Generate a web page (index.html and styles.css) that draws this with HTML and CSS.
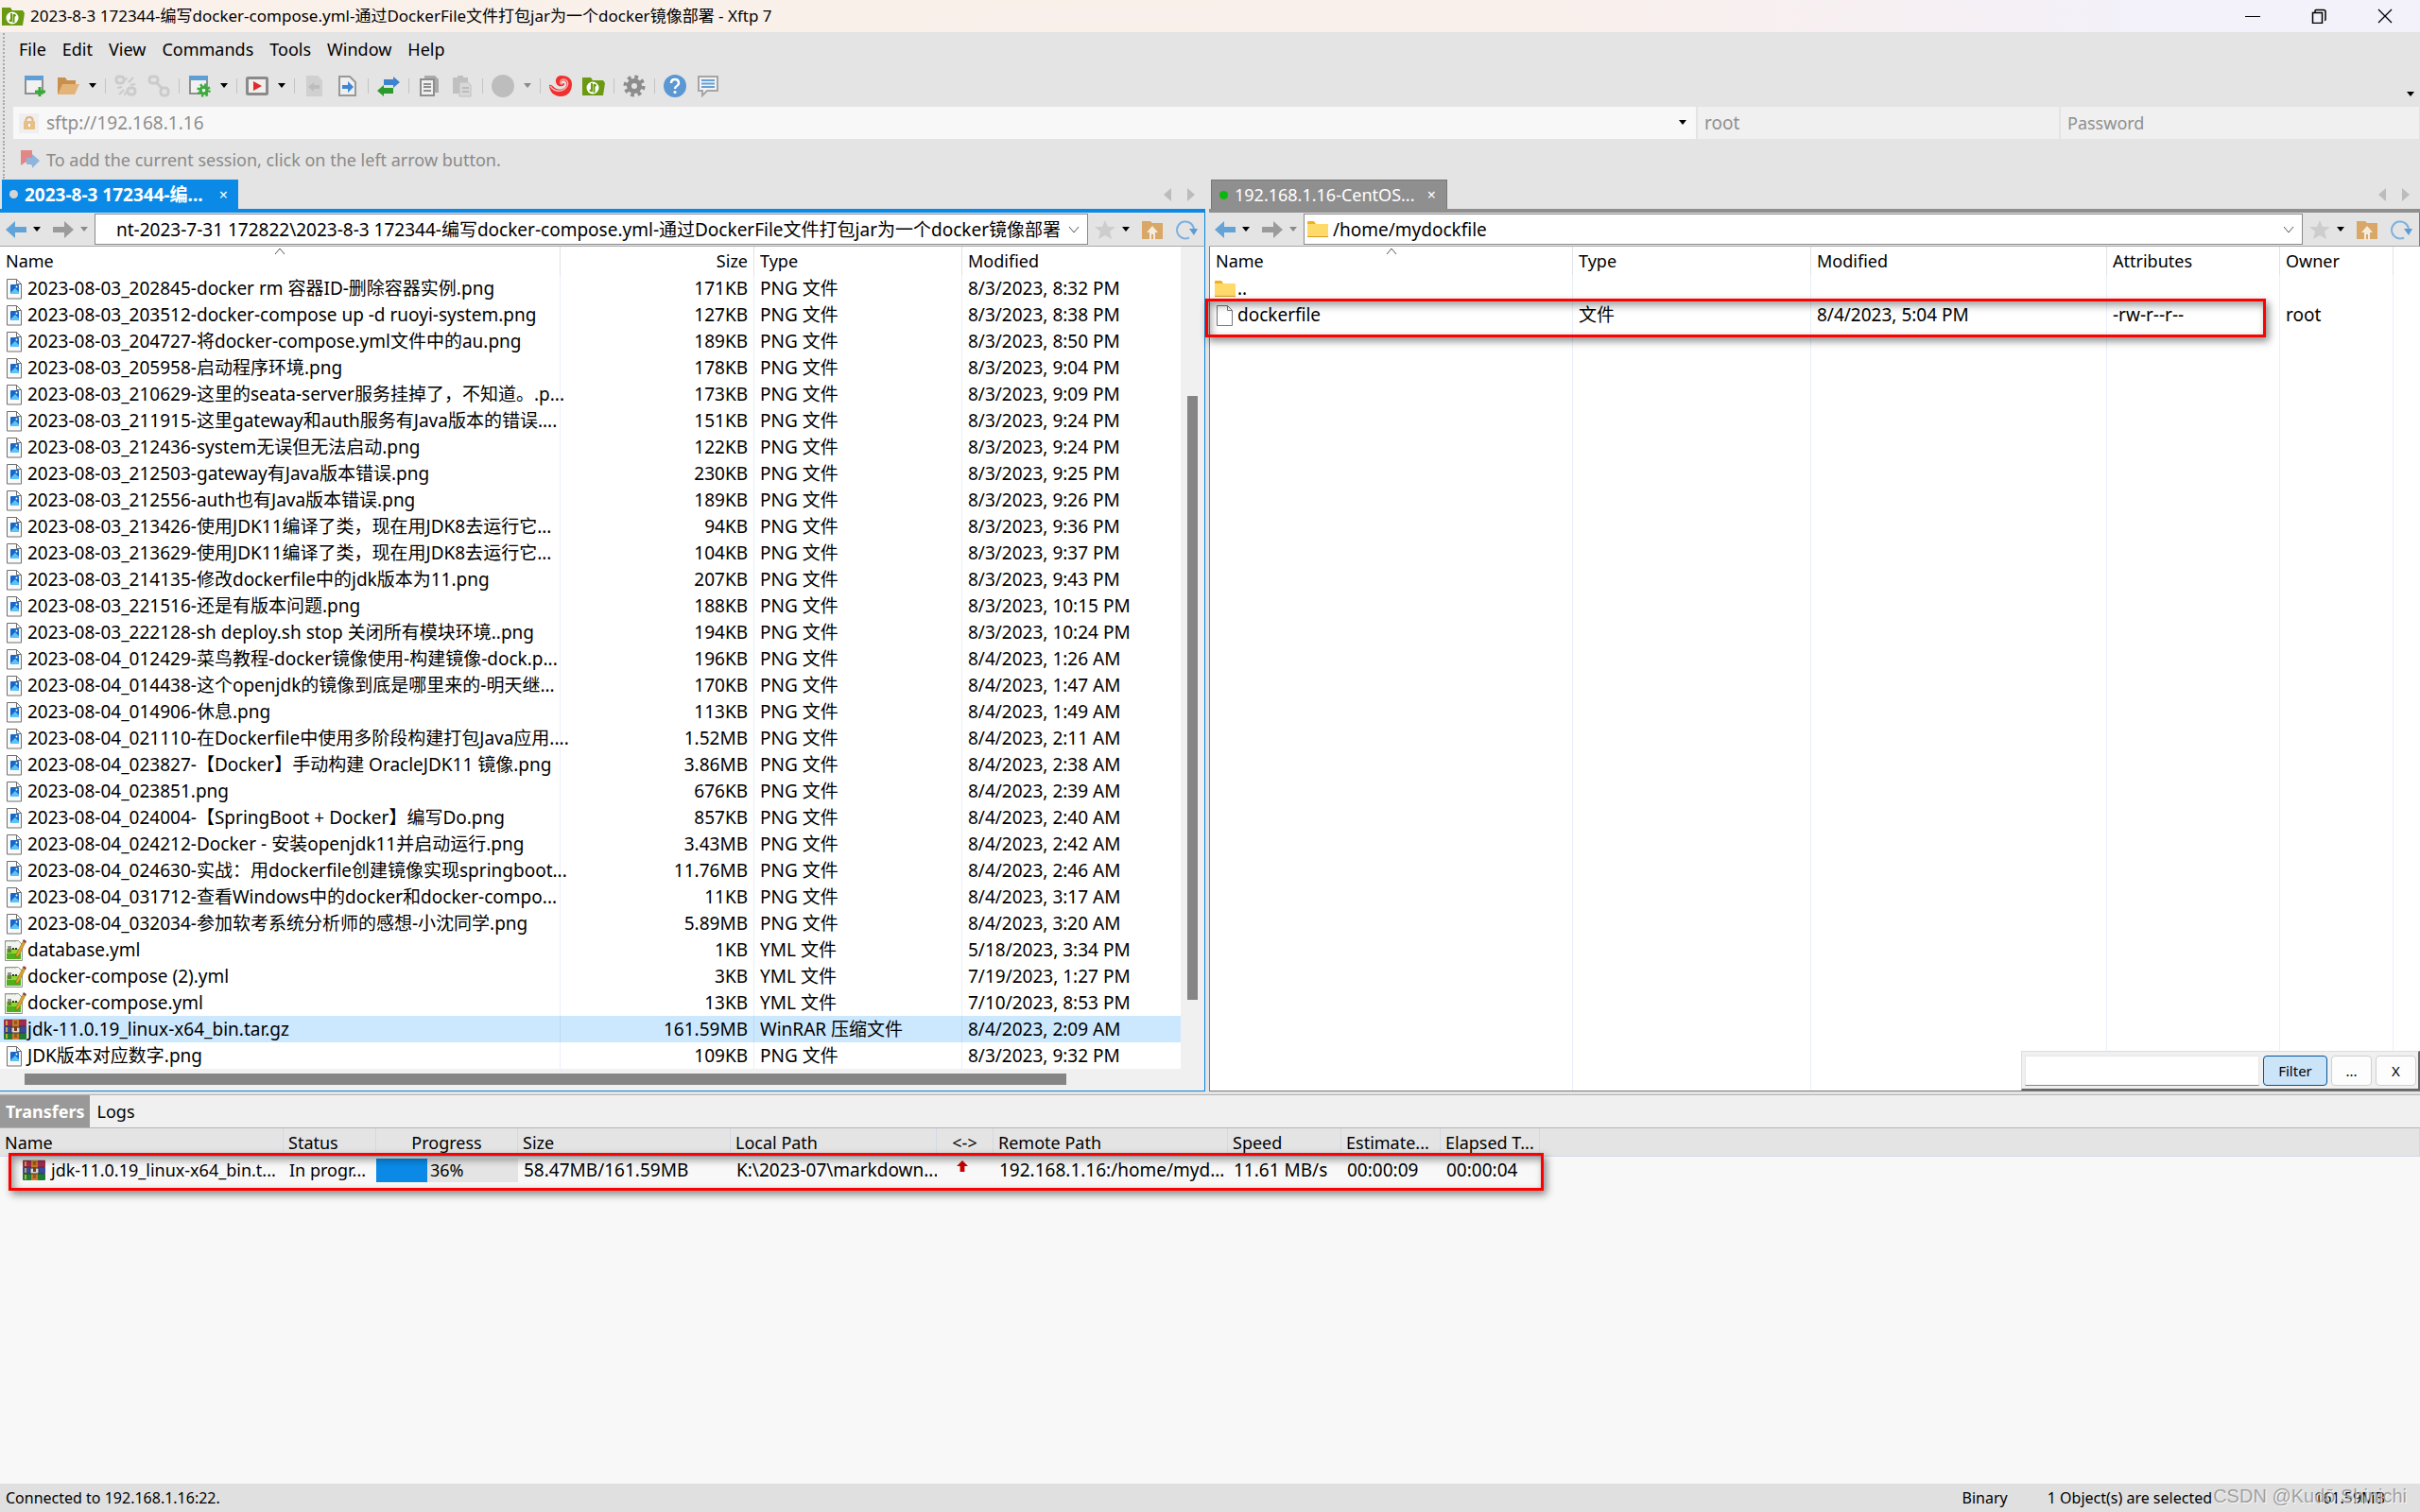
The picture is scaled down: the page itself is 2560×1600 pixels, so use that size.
FILE: index.html
```html
<!DOCTYPE html>
<html lang="zh-CN">
<head>
<meta charset="utf-8">
<title>2023-8-3 172344-编写docker-compose.yml-通过DockerFile文件打包jar为一个docker镜像部署 - Xftp 7</title>
<link rel="stylesheet" href="styles.css">
</head>
<body>
<svg class="defs" aria-hidden="true">
  <symbol id="png" viewBox="4 0 24 24"><path d="M7.500 1.500h10l5 5v15.500h-15zM17.500 1.500v5h5" fill="#fafafa" stroke="#6e6e6e"/><rect x="11" y="7" width="9" height="10" rx="1" fill="#1668c8"/><path d="M11 16l5-5 4 4v1q0 1-1 1h-7q-1 0-1-1z" fill="#5cc3f5"/><circle cx="17.500" cy="9.500" r="1" fill="#fff"/></symbol>
  <symbol id="yml" viewBox="0 0 24 24"><path d="M1.500 1.500h14l4 4v17h-18z" fill="#f2f5ee" stroke="#8d948a"/><path d="M3 10h15v11H3z" fill="#8ed62e"/><path d="M3 15h15v6H3z" fill="#4fae1a"/><path d="M5 7v7M7 7v7" stroke="#333"/><path d="M9 10h2M12 10h2" stroke="#333" stroke-width="2"/><path d="M2 2h12" stroke="#999" stroke-dasharray="2 1"/><path d="M21 1l2 2-7 14-3 2 0-3z" fill="#e0a52a" stroke="#8c6412" stroke-width=".6"/><path d="M21 0l3 2-1 2-3-2z" fill="#8a3b4a"/></symbol>
  <symbol id="rar" viewBox="0 0 24 24"><rect y="1" width="24" height="7" rx="1" fill="#a52a50"/><rect y="8" width="24" height="7" rx="1" fill="#3a4a9c"/><rect y="15" width="24" height="7" rx="1" fill="#1f7a34"/><path d="M0 1h24M0 8h24M0 15h24" stroke="#222" stroke-opacity=".5"/><path d="M3 2v5M3 9v5M3 16v5" stroke="#e2c23a" stroke-width="1.500"/><rect x="9" y="1" width="7" height="21" fill="#c8792a"/><rect x="8" y="9" width="9" height="6" rx="1" fill="#d8d8d8" stroke="#333"/><rect x="11" y="8" width="3" height="5" fill="#7a3c10"/><path d="M11 3h3M11 5h3M11 17h3M11 19h3" stroke="#6b3a0c"/></symbol>
  <symbol id="folder" viewBox="0 0 24 24"><path d="M1 4q0-1 1-1h6l2 3h12v5H1z" fill="#f2b020"/><path d="M1 6h21q1 0 1 1v12H1z" fill="#ffd96a"/><path d="M1 19h22v1H1z" fill="#d99a1c"/></symbol>
  <symbol id="file" viewBox="0 0 24 24"><path d="M3.500 1.500h11l5 5v16h-16zM14.500 1.500v5h5" fill="#fff" stroke="#777"/></symbol>
  <symbol id="back" viewBox="0 0 24 20"><path d="M1 10L11 1v6h12v6H11v6z" fill="#64a3d8"/></symbol>
  <symbol id="fwd" viewBox="0 0 24 20"><path d="M23 10L13 1v6H1v6h12v6z" fill="#9b9b9b"/></symbol>
  <symbol id="caret" viewBox="0 0 8 6"><path d="M0 0h8L4 5z" fill="currentColor"/></symbol>
  <symbol id="chev" viewBox="0 0 12 8"><path d="M1 1l5 6 5-6" fill="none" stroke="#555"/></symbol>
  <symbol id="sort" viewBox="0 0 12 8"><path d="M1 7l5-6 5 6" fill="none" stroke="#555"/></symbol>
  <symbol id="star" viewBox="0 0 24 24"><path d="M12 2l3 7 8 0-6 5 2 8-7-4-7 4 2-8-6-5 8 0z" fill="#cdcdcd"/></symbol>
  <symbol id="up" viewBox="0 0 24 24"><path d="M1 3h9l2 2h11v17H1z" fill="#d9a766"/><path d="M12 8l6 7h-3v8h-2v-6h-2v6H9v-8H6z" fill="#f5ecdf"/></symbol>
  <symbol id="refresh" viewBox="0 0 24 24"><path d="M15 20.500A9 9 0 1 1 20 12" fill="none" stroke="#7fb0de" stroke-width="2"/><path d="M15 11h9l-4 7z" fill="#5b9bd8"/></symbol>
  <symbol id="left" viewBox="0 0 10 14"><path d="M9 0v14L1 7z" fill="#bcbcbc"/></symbol>
  <symbol id="right" viewBox="0 0 10 14"><path d="M1 0v14l8-7z" fill="#bcbcbc"/></symbol>
  <symbol id="xftp" viewBox="0 0 24 24"><path d="M0 3h9l2 3h11l2 3-2 13H0z" fill="#6a9a12"/><circle cx="11" cy="14" r="6.500" fill="#fff"/><path d="M10 9v8q0 1-2-1M12.500 19v-8q0-1 2 1" fill="none" stroke="#6a9a12" stroke-width="2"/></symbol>
  <symbol id="cog" viewBox="0 0 24 24"><circle cx="12" cy="12" r="5.500" fill="none" stroke="currentColor" stroke-width="5"/><circle cx="12" cy="12" r="9.500" fill="none" stroke="currentColor" stroke-width="4" stroke-dasharray="3.700 3.760"/></symbol>
</svg>

<header class="titlebar">
  <svg class="i24"><use href="#xftp"/></svg>
  <h1>2023-8-3 172344-编写docker-compose.yml-通过DockerFile文件打包jar为一个docker镜像部署 - Xftp 7</h1>
  <div class="winbtns">
    <button aria-label="Minimize"><svg class="i16"><path d="M0 8.500h16" stroke="#000"/></svg></button>
    <button aria-label="Restore"><svg class="i16"><path d="M1.500 4.500h10v11h-10zM4 4V2.500Q4 1.500 5 1.500h8q2 0 2 2v8q0 1-1 1" fill="none" stroke="#000" stroke-width="1.500"/></svg></button>
    <button aria-label="Close"><svg class="i16"><path d="M1 1l14 14M15 1L1 15" stroke="#000" stroke-width="1.300"/></svg></button>
  </div>
</header>

<nav class="menubar grip">
  <button>File</button><button>Edit</button><button>View</button><button>Commands</button><button>Tools</button><button>Window</button><button>Help</button>
</nav>

<div class="toolbar grip">
  <button aria-label="New"><svg class="i24"><path d="M2 2h18v18H2z" fill="#f1f1f1" stroke="#8f8f8f" stroke-width="2"/><path d="M1 1h20v5H1z" fill="#5f9fd6"/><path d="M17 13v10M12 18h11" stroke="#2fae2f" stroke-width="3"/></svg></button>
  <button aria-label="Open"><svg class="i24"><path d="M1 3h8l2 3h9v4H7L3 21H1z" fill="#c98f4c"/><path d="M6 10h18l-5 11H1z" fill="#e3b377"/></svg></button>
  <svg class="caret"><use href="#caret"/></svg><i class="sep"></i>
  <button aria-label="Reconnect" disabled><svg class="i24" fill="none" stroke="#cbcbcb" stroke-width="3"><rect x="2" y="2" width="8" height="7" rx="3"/><rect x="14" y="14" width="8" height="7" rx="3"/><path d="M13 3l-1 3M20 3l-5 5M22 10l-5 1M3 14l5-1M5 21l5-5M11 22l1-4" stroke-width="2"/></svg></button>
  <button aria-label="Disconnect" disabled><svg class="i24" fill="none" stroke="#cbcbcb" stroke-width="3"><rect x="2" y="2" width="9" height="7" rx="3"/><rect x="14" y="14" width="8" height="8" rx="3"/><path d="M9 8l7 7"/></svg></button>
  <i class="sep"></i>
  <button aria-label="Session properties"><svg class="i24"><path d="M2 2h18v18H2z" fill="#f1f1f1" stroke="#8f8f8f" stroke-width="2"/><path d="M1 1h20v5H1z" fill="#5f9fd6"/><g color="#3bab3b"><use href="#cog" x="9" y="9" width="15" height="15"/></g></svg></button>
  <svg class="caret"><use href="#caret"/></svg><i class="sep"></i>
  <button aria-label="Run"><svg class="i24"><rect x="1.500" y="3.500" width="21" height="17" rx="1" fill="#f3eeee" stroke="#8a8a8a" stroke-width="3"/><path d="M8 7l9 5-9 5z" fill="#e02a2a"/></svg></button>
  <svg class="caret"><use href="#caret"/></svg><i class="sep"></i>
  <button aria-label="Transfer left" disabled><svg class="i24"><path d="M3 1h12l5 5v17H3z" fill="#d0d0d0"/><path d="M5 13l6-5v3h6v4h-6v3z" fill="#bdbdbd"/></svg></button>
  <button aria-label="Transfer right"><svg class="i24"><path d="M3 2h11l6 6v14H3z" fill="#efefef" stroke="#999" stroke-width="2"/><path d="M18 13l-6-6v4H6v4h6v4z" fill="#3f86d6"/></svg></button>
  <i class="sep"></i>
  <button aria-label="Synchronize"><svg class="i24"><path d="M24 8l-7-6v3H7v6h10v3z" fill="#3d84cf"/><path d="M0 17l7-6v3h10v6H7v3z" fill="#2c9a2c"/></svg></button>
  <i class="sep"></i>
  <button aria-label="Copy"><svg class="i24"><path d="M7 1h11l4 4v14H7z" fill="#a9a9a9"/><path d="M3 5h14v17H3z" fill="#efefef" stroke="#8e8e8e" stroke-width="2"/><path d="M6 10h8M6 13h8M6 17h8" stroke="#8e8e8e" stroke-width="2"/></svg></button>
  <button aria-label="Paste" disabled><svg class="i24"><path d="M2 3h5V1h6v2h5v17H2z" fill="#c0c0c0"/><path d="M9 8h9l3 3v12H9z" fill="#d8d8d8" stroke="#c0c0c0"/><path d="M12 14h7M12 18h7" stroke="#bbb" stroke-width="2"/></svg></button>
  <i class="sep"></i>
  <button aria-label="Stop" disabled><svg class="i24"><circle cx="12" cy="12" r="12" fill="#bdbdbd"/></svg></button>
  <svg class="caret dim"><use href="#caret"/></svg><i class="sep"></i>
  <button aria-label="Xshell"><svg class="i24"><path d="M13 1C6 1 5 9 10 12c4 1 7-1 6-3-2 1-4 0-3-2 3-2 6 1 5 4-1 5-8 6-12 3-2-1-3-4-6-3 0 7 5 12 12 12 8 0 12-6 12-13C24 4 19 1 13 1z" fill="#f02f2f"/><path d="M1 12c5 7 14 7 18 0 2-4-1-8-5-7-3 1-3 5 0 5" fill="none" stroke="#f7b9b4" stroke-width="1.300"/></svg></button>
  <button aria-label="Xftp"><svg class="i24"><use href="#xftp"/></svg></button>
  <i class="sep"></i>
  <button aria-label="Options" class="gear"><svg class="i24"><use href="#cog"/></svg></button>
  <i class="sep"></i>
  <button aria-label="Help"><svg class="i24"><circle cx="12" cy="12" r="12" fill="#5b97d3"/><path d="M8 9q0-4 4-4t4 4q0 2-2 3t-2 3" fill="none" stroke="#fff" stroke-width="2.500"/><circle cx="12" cy="18.500" r="1.600" fill="#fff"/></svg></button>
  <button aria-label="Feedback"><svg class="i24"><path d="M2 2h20v15H11l-5 5v-5H2z" fill="#f2f2f2" stroke="#a5a5a5" stroke-width="2"/><path d="M5 6h14M5 9.500h14M5 13h14" stroke="#68a0d8" stroke-width="2"/></svg></button>
  <svg class="caret more"><use href="#caret"/></svg>
</div>

<form class="address grip">
  <label class="host"><span class="lockbox"><svg class="i16"><path d="M4.500 7V5q0-3 3.500-3t3.500 3v2" fill="none" stroke="#e0b478" stroke-width="2"/><rect x="2" y="6" width="12" height="9" rx="1" fill="#e8bf86"/><path d="M8 9v3" stroke="#fff" stroke-width="2"/></svg></span><input aria-label="Host" value="sftp://192.168.1.16"><svg class="caret"><use href="#caret"/></svg></label>
  <input class="user" aria-label="User name" value="root">
  <input class="pass" type="password" aria-label="Password" placeholder="Password">
</form>

<div class="bookmarks grip"><svg class="i24"><path d="M2 2h12v16l-6-4-6 4z" fill="#e28686"/><path d="M22 13l-8-7v4H8v7h6v4z" fill="#8fb4de"/></svg><span>To add the current session, click on the left arrow button.</span></div>

<main class="panes">
  <section class="pane local">
    <div class="tabs"><button class="tab"><i class="dot"></i><b>2023-8-3 172344-编...</b><span class="x">×</span></button><span class="tabnav"><svg><use href="#left"/></svg><svg><use href="#right"/></svg></span></div>
    <div class="pathbar">
      <button aria-label="Back"><svg class="arrow"><use href="#back"/></svg></button><svg class="caret"><use href="#caret"/></svg>
      <button aria-label="Forward"><svg class="arrow"><use href="#fwd"/></svg></button><svg class="caret dim"><use href="#caret"/></svg>
      <label class="path"><input aria-label="Local path" value="nt-2023-7-31 172822\2023-8-3 172344-编写docker-compose.yml-通过DockerFile文件打包jar为一个docker镜像部署"><svg class="chev"><use href="#chev"/></svg></label>
      <svg class="i24"><use href="#star"/></svg><svg class="caret"><use href="#caret"/></svg>
      <button class="upbtn" aria-label="Up"><svg class="i24"><use href="#up"/></svg></button><button aria-label="Refresh"><svg class="i24"><use href="#refresh"/></svg></button>
    </div>
    <div class="listwrap">
      <table class="files">
        <colgroup><col class="c-name"><col class="c-size"><col class="c-type"><col></colgroup>
        <thead><tr><th>Name<svg class="sort"><use href="#sort"/></svg></th><th class="num">Size</th><th>Type</th><th>Modified</th></tr></thead>
        <tbody>
<tr><td><svg><use href="#png"/></svg>2023-08-03_202845-docker rm 容器ID-删除容器实例.png</td><td>171KB</td><td>PNG 文件</td><td>8/3/2023, 8:32 PM</td></tr>
<tr><td><svg><use href="#png"/></svg>2023-08-03_203512-docker-compose up -d ruoyi-system.png</td><td>127KB</td><td>PNG 文件</td><td>8/3/2023, 8:38 PM</td></tr>
<tr><td><svg><use href="#png"/></svg>2023-08-03_204727-将docker-compose.yml文件中的au.png</td><td>189KB</td><td>PNG 文件</td><td>8/3/2023, 8:50 PM</td></tr>
<tr><td><svg><use href="#png"/></svg>2023-08-03_205958-启动程序环境.png</td><td>178KB</td><td>PNG 文件</td><td>8/3/2023, 9:04 PM</td></tr>
<tr><td><svg><use href="#png"/></svg>2023-08-03_210629-这里的seata-server服务挂掉了，不知道。.p...</td><td>173KB</td><td>PNG 文件</td><td>8/3/2023, 9:09 PM</td></tr>
<tr><td><svg><use href="#png"/></svg>2023-08-03_211915-这里gateway和auth服务有Java版本的错误....</td><td>151KB</td><td>PNG 文件</td><td>8/3/2023, 9:24 PM</td></tr>
<tr><td><svg><use href="#png"/></svg>2023-08-03_212436-system无误但无法启动.png</td><td>122KB</td><td>PNG 文件</td><td>8/3/2023, 9:24 PM</td></tr>
<tr><td><svg><use href="#png"/></svg>2023-08-03_212503-gateway有Java版本错误.png</td><td>230KB</td><td>PNG 文件</td><td>8/3/2023, 9:25 PM</td></tr>
<tr><td><svg><use href="#png"/></svg>2023-08-03_212556-auth也有Java版本错误.png</td><td>189KB</td><td>PNG 文件</td><td>8/3/2023, 9:26 PM</td></tr>
<tr><td><svg><use href="#png"/></svg>2023-08-03_213426-使用JDK11编译了类，现在用JDK8去运行它...</td><td>94KB</td><td>PNG 文件</td><td>8/3/2023, 9:36 PM</td></tr>
<tr><td><svg><use href="#png"/></svg>2023-08-03_213629-使用JDK11编译了类，现在用JDK8去运行它...</td><td>104KB</td><td>PNG 文件</td><td>8/3/2023, 9:37 PM</td></tr>
<tr><td><svg><use href="#png"/></svg>2023-08-03_214135-修改dockerfile中的jdk版本为11.png</td><td>207KB</td><td>PNG 文件</td><td>8/3/2023, 9:43 PM</td></tr>
<tr><td><svg><use href="#png"/></svg>2023-08-03_221516-还是有版本问题.png</td><td>188KB</td><td>PNG 文件</td><td>8/3/2023, 10:15 PM</td></tr>
<tr><td><svg><use href="#png"/></svg>2023-08-03_222128-sh deploy.sh stop 关闭所有模块环境..png</td><td>194KB</td><td>PNG 文件</td><td>8/3/2023, 10:24 PM</td></tr>
<tr><td><svg><use href="#png"/></svg>2023-08-04_012429-菜鸟教程-docker镜像使用-构建镜像-dock.p...</td><td>196KB</td><td>PNG 文件</td><td>8/4/2023, 1:26 AM</td></tr>
<tr><td><svg><use href="#png"/></svg>2023-08-04_014438-这个openjdk的镜像到底是哪里来的-明天继...</td><td>170KB</td><td>PNG 文件</td><td>8/4/2023, 1:47 AM</td></tr>
<tr><td><svg><use href="#png"/></svg>2023-08-04_014906-休息.png</td><td>113KB</td><td>PNG 文件</td><td>8/4/2023, 1:49 AM</td></tr>
<tr><td><svg><use href="#png"/></svg>2023-08-04_021110-在Dockerfile中使用多阶段构建打包Java应用....</td><td>1.52MB</td><td>PNG 文件</td><td>8/4/2023, 2:11 AM</td></tr>
<tr><td><svg><use href="#png"/></svg>2023-08-04_023827-【Docker】手动构建 OracleJDK11 镜像.png</td><td>3.86MB</td><td>PNG 文件</td><td>8/4/2023, 2:38 AM</td></tr>
<tr><td><svg><use href="#png"/></svg>2023-08-04_023851.png</td><td>676KB</td><td>PNG 文件</td><td>8/4/2023, 2:39 AM</td></tr>
<tr><td><svg><use href="#png"/></svg>2023-08-04_024004-【SpringBoot + Docker】编写Do.png</td><td>857KB</td><td>PNG 文件</td><td>8/4/2023, 2:40 AM</td></tr>
<tr><td><svg><use href="#png"/></svg>2023-08-04_024212-Docker - 安装openjdk11并启动运行.png</td><td>3.43MB</td><td>PNG 文件</td><td>8/4/2023, 2:42 AM</td></tr>
<tr><td><svg><use href="#png"/></svg>2023-08-04_024630-实战：用dockerfile创建镜像实现springboot...</td><td>11.76MB</td><td>PNG 文件</td><td>8/4/2023, 2:46 AM</td></tr>
<tr><td><svg><use href="#png"/></svg>2023-08-04_031712-查看Windows中的docker和docker-compo...</td><td>11KB</td><td>PNG 文件</td><td>8/4/2023, 3:17 AM</td></tr>
<tr><td><svg><use href="#png"/></svg>2023-08-04_032034-参加软考系统分析师的感想-小沈同学.png</td><td>5.89MB</td><td>PNG 文件</td><td>8/4/2023, 3:20 AM</td></tr>
<tr><td><svg><use href="#yml"/></svg>database.yml</td><td>1KB</td><td>YML 文件</td><td>5/18/2023, 3:34 PM</td></tr>
<tr><td><svg><use href="#yml"/></svg>docker-compose (2).yml</td><td>3KB</td><td>YML 文件</td><td>7/19/2023, 1:27 PM</td></tr>
<tr><td><svg><use href="#yml"/></svg>docker-compose.yml</td><td>13KB</td><td>YML 文件</td><td>7/10/2023, 8:53 PM</td></tr>
<tr class="sel"><td><svg><use href="#rar"/></svg>jdk-11.0.19_linux-x64_bin.tar.gz</td><td>161.59MB</td><td>WinRAR 压缩文件</td><td>8/4/2023, 2:09 AM</td></tr>
<tr><td><svg><use href="#png"/></svg>JDK版本对应数字.png</td><td>109KB</td><td>PNG 文件</td><td>8/3/2023, 9:32 PM</td></tr>
        </tbody>
      </table>
      <div class="vscroll"><i></i></div>
    </div>
    <div class="hscroll"><i></i></div>
  </section>

  <section class="pane remote">
    <div class="tabs"><button class="tab"><i class="dot"></i><span>192.168.1.16-CentOS...</span><span class="x">×</span></button><span class="tabnav"><svg><use href="#left"/></svg><svg><use href="#right"/></svg></span></div>
    <div class="pathbar">
      <button aria-label="Back"><svg class="arrow"><use href="#back"/></svg></button><svg class="caret"><use href="#caret"/></svg>
      <button aria-label="Forward"><svg class="arrow"><use href="#fwd"/></svg></button><svg class="caret dim"><use href="#caret"/></svg>
      <label class="path"><svg class="i24"><use href="#folder"/></svg><input aria-label="Remote path" value="/home/mydockfile"><svg class="chev"><use href="#chev"/></svg></label>
      <svg class="i24"><use href="#star"/></svg><svg class="caret"><use href="#caret"/></svg>
      <button class="upbtn" aria-label="Up"><svg class="i24"><use href="#up"/></svg></button><button aria-label="Refresh"><svg class="i24"><use href="#refresh"/></svg></button>
    </div>
    <div class="listwrap">
      <table class="files">
        <colgroup><col class="r-name"><col class="r-type"><col class="r-mod"><col class="r-attr"><col class="r-owner"><col></colgroup>
        <thead><tr><th>Name<svg class="sort"><use href="#sort"/></svg></th><th>Type</th><th>Modified</th><th>Attributes</th><th>Owner</th><th></th></tr></thead>
        <tbody>
          <tr><td><svg><use href="#folder"/></svg>..</td><td></td><td></td><td></td><td></td><td></td></tr>
          <tr><td><svg><use href="#file"/></svg>dockerfile</td><td>文件</td><td>8/4/2023, 5:04 PM</td><td>-rw-r--r--</td><td>root</td><td></td></tr>
          <tr class="rest"><td></td><td></td><td></td><td></td><td></td><td></td></tr>
        </tbody>
      </table>
      <div class="mark mark-file"></div>
      <form class="filter"><input aria-label="Filter text"><button type="button" class="on">Filter</button><button type="button">...</button><button type="button">X</button></form>
    </div>
  </section>
</main>

<section class="transfers">
  <div class="ttabs"><button class="on">Transfers</button><button>Logs</button></div>
  <div class="twrap">
    <table class="jobs">
      <colgroup><col class="t-name"><col class="t-status"><col class="t-prog"><col class="t-size"><col class="t-local"><col class="t-dir"><col class="t-remote"><col class="t-speed"><col class="t-time"><col class="t-time"><col></colgroup>
      <thead><tr><th>Name</th><th>Status</th><th class="mid">Progress</th><th>Size</th><th>Local Path</th><th class="mid">&lt;-&gt;</th><th>Remote Path</th><th>Speed</th><th>Estimate...</th><th>Elapsed T...</th><th></th></tr></thead>
      <tbody><tr><td><svg><use href="#rar"/></svg>jdk-11.0.19_linux-x64_bin.t...</td><td>In progr...</td><td class="prog"><div class="bar"><i style="width:36%"></i>36%</div></td><td>58.47MB/161.59MB</td><td>K:\2023-07\markdown...</td><td class="dir"><svg viewBox="0 0 10 10"><path d="M5 0l5 5H7v5H3V5H0z" fill="#c80000"/></svg></td><td>192.168.1.16:/home/myd...</td><td>11.61 MB/s</td><td>00:00:09</td><td>00:00:04</td><td></td></tr></tbody>
    </table>
    <div class="mark mark-job"></div>
  </div>
</section>

<footer class="status"><span>Connected to 192.168.1.16:22.</span><span class="mode">Binary</span><span class="count">1 Object(s) are selected</span><span class="total">161.59MB</span><span class="wm">CSDN @Kudō Shinichi</span></footer>
</body>
</html>
```
FILE: styles.css
```css
* { box-sizing: border-box; }
body {
  margin: 0;
  min-height: 100vh;
  display: flex;
  flex-direction: column;
  background: #e4e4e4;
  color: #000;
  font: 18px/28px "Noto Sans", "Noto Sans CJK SC", sans-serif;
}
button, input { font: inherit; color: inherit; border: 0; padding: 0; background: none; margin: 0; }
input { min-width: 0; outline: 0; }
button { display: inline-flex; align-items: center; }
svg { flex: none; display: block; }
.defs { display: none; }
.i24 { width: 24px; height: 24px; }
.i16 { width: 16px; height: 16px; }
.caret { width: 8px; height: 6px; color: #000; }
.caret.dim { color: #8a8a8a; }

/* Title bar */
.titlebar { height: 34px; display: flex; align-items: center; gap: 6px; padding-left: 2px; background: linear-gradient(90deg, #faf1ea 0%, #faf0eb 62%, #f7f0f3 78%, #f3f1f9 88%); }
.titlebar h1 { margin: 0; font-size: 17px; font-weight: 400; white-space: nowrap; }
.winbtns { margin-left: auto; display: flex; gap: 54px; padding-right: 29px; }

/* Bars with a drag grip */
.grip { position: relative; display: flex; align-items: center; }
.grip::before { content: ""; position: absolute; left: 3px; top: 1px; bottom: 1px; border-left: 2px dotted #a8a8a8; }
.menubar { height: 36px; gap: 17px; padding-left: 20px; }
.toolbar { height: 42px; gap: 9px; padding: 0 6px 0 25px; }
.toolbar button + button { margin-left: 2px; }
.toolbar .caret { margin-left: 1px; }
.toolbar .more { margin-left: auto; align-self: flex-end; margin-bottom: 9px; }
.sep { width: 1px; height: 16px; background: #c4c4c4; }
.gear { color: #8c8c8c; }
.address { height: 36px; padding: 1px 1px 1px 14px; display: grid; grid-template-columns: 1780fr 382fr 379fr; gap: 2px; color: #8f8f8f; align-items: stretch; font-size: 19px; }
.host { display: flex; align-items: center; gap: 8px; padding: 0 10px 0 6px; background: #f8f8f8; }
.host input { flex: 1; }
.lockbox { width: 21px; height: 21px; background: #efefef; display: grid; place-items: center; }
.address .user, .address .pass { width: 100%; padding: 0 7px; background: #f0f0f0; }
.address ::placeholder { color: #8f8f8f; opacity: 1; font-size: 18px; }
.bookmarks { height: 42px; padding-left: 20px; gap: 5px; color: #8a8a8a; }

/* Panes */
.panes { display: grid; grid-template-columns: 1275fr 1281fr; gap: 4px; }
.pane { --line: #0a84d8; --tab: #0a8ae6; min-width: 0; display: flex; flex-direction: column; }
.remote { --line: #7b7b7b; --tab: #8f8f8f; }
.tabs { height: 35px; display: flex; align-items: center; border-bottom: 4px solid var(--tab); padding-left: 2px; }
.tab { width: 250px; height: 31px; background: var(--tab); color: #fff; padding: 0 11px 0 8px; gap: 7px; white-space: nowrap; font-size: 19px; }
.remote .tab { border: 1px solid #777; border-bottom: 0; font-size: 18px; }
.x { margin-left: auto; font-size: 16px; }
.dot { width: 9px; height: 9px; border-radius: 50%; background: #d4d4d4; }
.remote .dot { background: #0ab80a; }
.tabnav { margin-left: auto; display: flex; gap: 15px; padding-right: 10px; }
.tabnav svg { width: 10px; height: 14px; }
.pathbar { height: 36px; display: flex; align-items: center; gap: 6px; padding: 0 7px 0 5px; border-bottom: 1px solid #aaa; border-right: 1px solid var(--line); font-size: 19px; }
.arrow { width: 24px; height: 20px; }
.pathbar .caret { margin-right: 6px; }
.pathbar .caret.dim { margin-right: 1px; }
.path { flex: 1; min-width: 0; height: 33px; display: flex; align-items: center; gap: 4px; padding: 0 8px 0 2px; background: #fff; border: 1px solid #8a8a8a; }
.path input { flex: 1; text-align: left; }
.local .path input { text-align: right; }
.path .chev { width: 12px; height: 8px; margin-left: 4px; }
.upbtn { margin-right: 6px; }
.listwrap { position: relative; flex: 1; display: flex; background: #fff; border-right: 1px solid var(--line); }
.remote .listwrap { border-left: 1px solid var(--line); border-bottom: 1px solid var(--line); border-right: 0; }
table { border-collapse: separate; border-spacing: 0; table-layout: fixed; }
th, td { padding: 0 6px; font-weight: 400; text-align: left; white-space: nowrap; overflow: hidden; border-right: 1px solid #e8f0fa; }
.files { flex: 1; width: 0; font-size: 19px; }
.files th { height: 30px; position: relative; font-size: 18px; border-color: #e2e2e2; }
.files td { height: 28px; }
.files th:last-child, .files td:last-child { border-right: 0; }
.files td svg { width: 24px; height: 24px; display: inline-block; vertical-align: middle; margin: -2px 1px 0 -2px; }
.files td:first-child { padding: 0 0 0 6px; overflow: visible; }
.files .num, .local td:nth-child(2) { text-align: right; }
.sort { position: absolute; left: 50%; top: 1px; width: 12px; height: 8px; margin-left: -6px; }
.sel td { background: #cce8ff; border-color: #bbdcf5; }
.rest td { height: auto; }
.remote .files { height: auto; }
.c-name { width: 593px; } .c-size { width: 205px; } .c-type { width: 220px; }
.r-name { width: 384px; } .r-type { width: 252px; } .r-mod { width: 313px; } .r-attr { width: 183px; } .r-owner { width: 120px; }
.vscroll { width: 25px; background: #f0f0f0; padding: 158px 7px 73px; display: flex; }
.vscroll i { flex: 1; background: #858585; }
.hscroll { height: 24px; background: #f0f0f0; padding: 5px 146px 6px 26px; border: solid var(--line); border-width: 0 1px 1px 0; display: flex; }
.hscroll i { flex: 1; background: #858585; }

.filter { position: absolute; right: 0; bottom: 0; width: 422px; height: 42px; display: flex; gap: 4px; padding: 4px 2px 3px 3px; background: #f0f0f0; border: 1px solid #ddd; border-right: 2px solid #666; border-bottom: 2px solid #666; font-size: 15px; }
.filter input { flex: 1; background: #fff; border: 1px solid #e6e6e6; border-bottom-color: #858585; }
.filter button { width: 43px; justify-content: center; background: #fdfdfd; border: 1px solid #d0d0d0; border-radius: 4px; }
.filter .on { width: 68px; background: #cce4f7; border-color: #005499; }

/* Red highlight frames */
.mark { position: absolute; border: 3px solid #f00; box-shadow: 3px 4px 8px rgba(0, 0, 0, .45), inset 3px 4px 8px rgba(0, 0, 0, .4); pointer-events: none; }
.mark-file { left: -5px; top: 55px; width: 1122px; height: 41px; }
.mark-job { left: 9px; top: 26px; width: 1624px; height: 40px; }

/* Transfers */
.transfers { flex: 1; display: flex; flex-direction: column; margin-top: 3px; border-top: 1px solid #b4b4b4; background: #f8f8f8; }
.ttabs { height: 35px; display: flex; background: #f0f0f0; border-bottom: 1px solid #b4b4b4; }
.ttabs button { padding: 0 7px; }
.ttabs .on { background: #999; color: #fff; font-weight: 700; padding: 0 6px; }
.twrap { position: relative; }
.jobs { width: 100%; }
.jobs th { height: 30px; padding: 0 5px; background: #e4e4e4; border-right-color: #d0d9e6; border-bottom: 1px solid #d0d9e6; }
.jobs td { height: 28px; padding: 0 0 0 6px; border: 0; font-size: 19px; }
.jobs td:nth-child(-n+3) { font-size: 18px; }
.jobs td:first-child { padding-left: 24px; }
.jobs td:first-child svg { width: 24px; height: 24px; display: inline-block; vertical-align: middle; margin: -3px 6px 0 0; }
.jobs .mid { text-align: center; }
.jobs .prog { padding: 0; }
.bar { display: flex; gap: 3px; height: 25px; line-height: 25px; background: #e4e4e4; }
.bar i { background: #0a8ae6; }
.dir svg { width: 12px; height: 12px; margin: -8px 0 0 15px; }
.t-name { width: 300px; } .t-status { width: 98px; } .t-prog { width: 150px; } .t-size { width: 225px; } .t-local { width: 218px; } .t-dir { width: 60px; } .t-remote { width: 248px; } .t-speed { width: 120px; } .t-time { width: 105px; }

/* Status bar */
.status { position: relative; height: 30px; display: flex; align-items: center; padding: 0 37px 0 6px; background: #e0e0e0; font-size: 16px; }
.mode { margin-left: auto; }
.count { margin-left: 42px; }
.total { margin-left: 108px; }
.wm { position: absolute; right: 14px; bottom: 3px; color: rgba(125, 125, 125, .7); font: 20px/28px "Liberation Sans", sans-serif; text-shadow: 1px 1px 0 rgba(255, 255, 255, .8); }
```
